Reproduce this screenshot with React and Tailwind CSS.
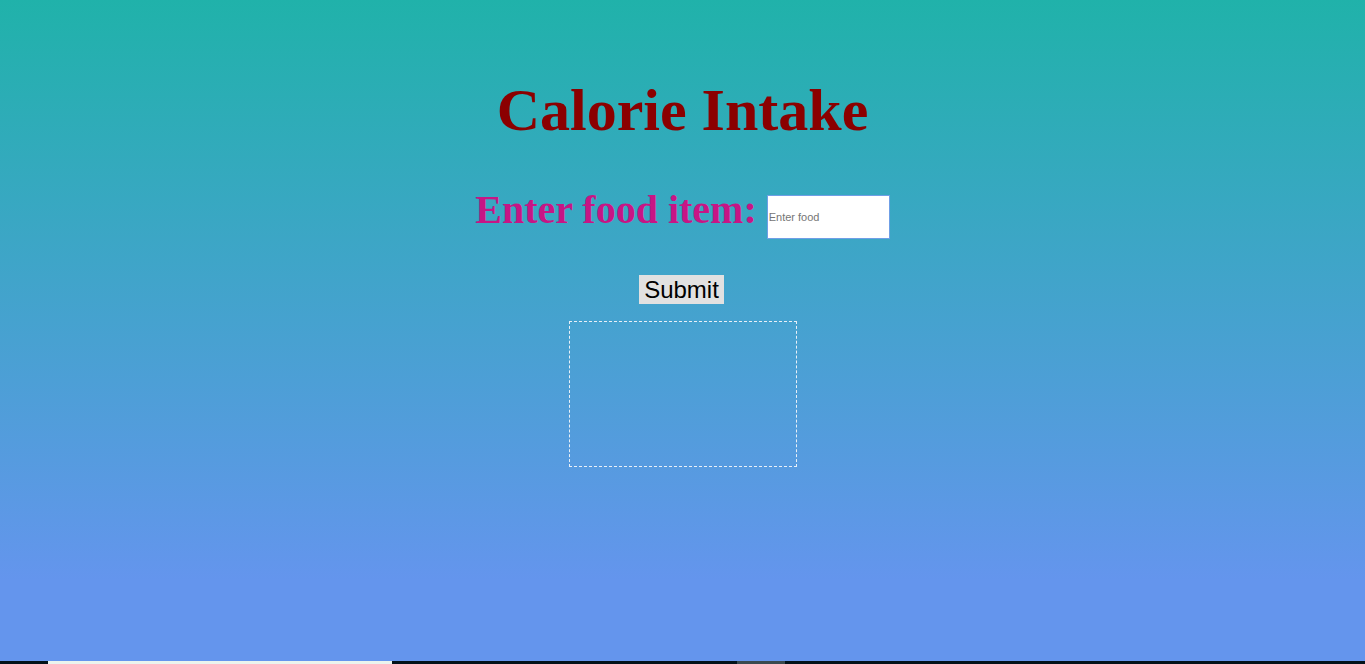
export default function App() {
  return (
    <div className="flex h-[664px] w-full flex-col overflow-hidden">
      <div className="flex flex-1 flex-col items-center bg-[linear-gradient(to_bottom,#20b2aa_0px,#6495ed_580px,#6495ed_100%)] pt-[74px]">
        <h1 className="font-['Liberation_Serif',serif] text-[60px] font-bold leading-[72px] text-[#8b0000]">
          Calorie Intake
        </h1>
        <div className="mt-[35px] flex items-center gap-[10px]">
          <label className="font-['Liberation_Serif',serif] text-[40px] font-bold leading-[46px] text-[#c71585]">
            Enter food item:
          </label>
          <input
            type="text"
            placeholder="Enter food"
            className="mt-[14px] h-[44px] w-[123px] border border-[#6f9fe6] bg-white px-[1px] font-['Liberation_Sans',sans-serif] text-[11px] text-black outline-none placeholder:text-[#757575]"
          />
        </div>
        <button className="mt-[36px] -translate-x-px h-[29px] bg-[#e1e1e1] px-[5px] font-['Liberation_Sans',sans-serif] text-[24px] leading-[29px] text-black">
          Submit
        </button>
        <div className="mt-[17px] h-[146px] w-[228px] border border-dashed border-[#e8f0f8]" />
      </div>
      <div className="flex h-[3px] bg-[#03121a]">
        <div className="ml-[48px] w-[344px] bg-[#eaf4ee]" />
        <div className="ml-[345px] w-[48px] bg-[#3a4a50]" />
      </div>
    </div>
  )
}
